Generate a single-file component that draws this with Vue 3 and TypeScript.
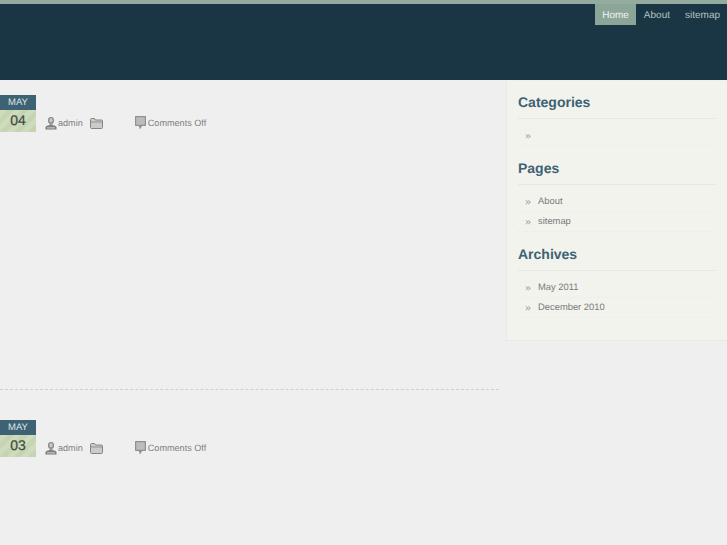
<script setup lang="ts">
interface Post {
  month: string
  day: string
}

const nav = ['Home', 'About', 'sitemap']

const posts: Post[] = [
  { month: 'MAY', day: '04' },
  { month: 'MAY', day: '03' },
]

const widgets = [
  { title: 'Categories', items: [''] },
  { title: 'Pages', items: ['About', 'sitemap'] },
  { title: 'Archives', items: ['May 2011', 'December 2010'] },
]
</script>

<template>
  <div class="page">
    <header class="header">
      <nav class="nav">
        <a v-for="(item, i) in nav" :key="item" class="nav-item" :class="{ active: i === 0 }">{{ item }}</a>
      </nav>
    </header>

    <div class="body">
      <main class="content">
        <article v-for="post in posts" :key="post.day" class="post">
          <div class="date">
            <div class="month">{{ post.month }}</div>
            <div class="day">{{ post.day }}</div>
          </div>
          <div class="meta">
            <span class="meta-author">
              <svg width="12" height="13" viewBox="0 0 12 13">
                <ellipse cx="6" cy="3.5" rx="3" ry="3.400" fill="#858585" />
                <ellipse cx="6" cy="3.300" rx="1.700" ry="2.200" fill="#c9c9c9" />
                <path d="M4.500 6.500h3v2h-3z" fill="#9a9a9a" />
                <path d="M.5 12.500v-2C.5 9 2.500 8 6 8s5.500 1 5.500 2.500v2z" fill="#7d7d7d" />
                <path d="M2 10.300h8v1.100H2z" fill="#cfcfcf" />
              </svg>
              admin
            </span>
            <svg class="folder" width="13" height="11" viewBox="0 0 13 11">
              <path d="M.5 1.500C.5 1 1 .5 1.500.5h3l1 1.500h6c.5 0 1 .4 1 1v6.500c0 .6-.5 1-1 1h-10c-.5 0-1-.4-1-1z" fill="#cbcbc7" stroke="#85857f" />
              <path d="M1 3.500h11v1H1z" fill="#93938e" />
            </svg>
            <span class="meta-comments">
              <svg width="11" height="14" viewBox="0 0 11 14">
                <path d="M0 1c0-.6.4-1 1-1h9c.6 0 1 .4 1 1v8c0 .6-.4 1-1 1H7l-2 3.500L3.800 10H1c-.6 0-1-.4-1-1z" fill="#8f8f8f" />
                <path d="M1.200 1.200h8.600v7.600H1.200z" fill="#bcbcbc" />
              </svg>
              Comments Off
            </span>
          </div>
        </article>
      </main>

      <aside class="sidebar">
        <section v-for="w in widgets" :key="w.title" class="widget">
          <h3 class="widget-title">{{ w.title }}</h3>
          <ul class="list">
            <li v-for="item in w.items" :key="item" class="list-item">
              <span class="raquo">»</span>{{ item }}
            </li>
          </ul>
        </section>
      </aside>
    </div>
  </div>
</template>

<style>
html,
body {
  margin: 0;
  background: #efefef;
}
</style>

<style scoped>
.page {
  width: 727px;
  height: 545px;
  overflow: hidden;
  background: #efefef;
  font-family: "Liberation Sans", Arial, sans-serif;
  text-rendering: geometricPrecision;
}

.header {
  height: 76px;
  background: #1a3644;
  border-top: 4px solid #94ab9f;
  display: flex;
  justify-content: flex-end;
  align-items: flex-start;
}

.nav {
  display: flex;
}

.nav-item {
  height: 21px;
  line-height: 23px;
  padding: 0 7px 0 8px;
  font-size: 10px;
  color: #b5c1c4;
}

.nav-item.active {
  padding: 0 7px;
  background: #8ba598;
  color: #f2f4f0;
}

.body {
  display: flex;
  align-items: flex-start;
}

.content {
  width: 499px;
  flex-shrink: 0;
  padding-top: 15px;
}

.post {
  height: 294px;
  margin-bottom: 30px;
  border-bottom: 1px dashed #cfcfcb;
  display: flex;
  align-items: flex-start;
}

.post:last-child {
  border-bottom: 0;
}

.date {
  width: 36px;
  text-align: center;
}

.month {
  height: 15px;
  line-height: 15px;
  background: #3d6274;
  color: #dfe7e9;
  font-size: 9.5px;
}

.day {
  height: 22px;
  line-height: 20px;
  font-size: 14px;
  color: #3f4a44;
  -webkit-text-stroke: 0.2px #3f4a44;
  background: repeating-linear-gradient(135deg, #cfdcbc 0 5px, #c5d5b3 5px 10px);
}

.meta {
  margin-left: 9px;
  margin-top: 21px;
  display: flex;
  align-items: center;
  font-size: 9.1px;
  color: #808080;
}

.meta-author,
.meta-comments {
  display: flex;
  align-items: center;
  gap: 1px;
}

.folder {
  margin-left: 7px;
}

.meta-comments {
  margin-left: 32px;
  gap: 2px;
}

.sidebar {
  margin-left: 7px;
  margin-top: 1px;
  width: 221px;
  height: 260px;
  box-sizing: border-box;
  background: #f3f3ee;
  border: 1px solid #e8e8e4;
  border-right: 0;
  border-top: 0;
  padding: 12px 11px 0 11px;
}

.widget-title {
  margin: 0;
  height: 25px;
  line-height: 19px;
  font-size: 14px;
  font-weight: bold;
  color: #3d6274;
  border-bottom: 1px solid #e8e8e3;
}

.list {
  list-style: none;
  margin: 0;
  padding: 7px 0 13px;
}

.list-item {
  height: 19px;
  line-height: 17px;
  padding-left: 7px;
  font-size: 9.4px;
  color: #7a7a7a;
  border-bottom: 1px dotted #ecece7;
}

.raquo {
  display: inline-block;
  width: 13px;
  font-size: 10.5px;
  line-height: 1;
  vertical-align: -1px;
  color: #9a9a9a;
}
</style>
